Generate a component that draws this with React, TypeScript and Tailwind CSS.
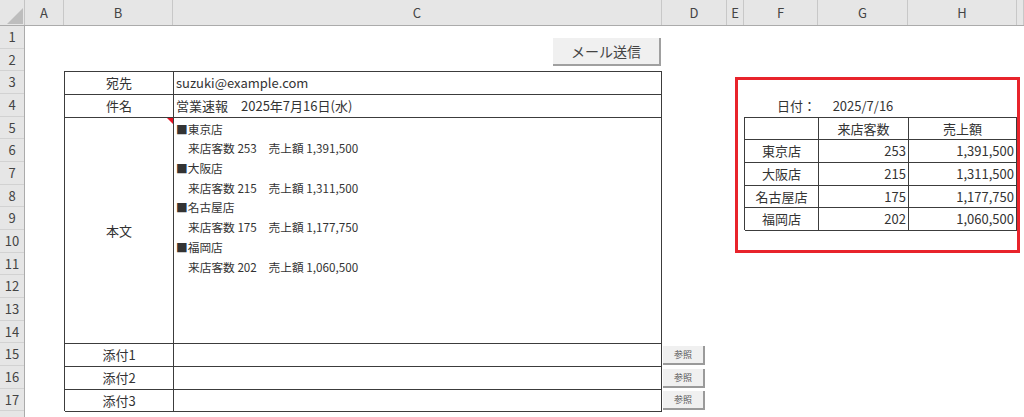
import React from 'react';

const font = { fontFamily: '"Noto Sans CJK JP", "Noto Sans", sans-serif' };

const colHeaders = [
  { label: 'A', w: 'w-[39px]' },
  { label: 'B', w: 'w-[109px]' },
  { label: 'C', w: 'w-[489px]' },
  { label: 'D', w: 'w-[65px]' },
  { label: 'E', w: 'w-[17px]' },
  { label: 'F', w: 'w-[74px]' },
  { label: 'G', w: 'w-[90px]' },
  { label: 'H', w: 'w-[109px]' },
  { label: '', w: 'flex-1' },
];

const rows = Array.from({ length: 17 }, (_, i) => i + 1);

const stores = [
  { name: '東京店', visits: 253, sales: '1,391,500' },
  { name: '大阪店', visits: 215, sales: '1,311,500' },
  { name: '名古屋店', visits: 175, sales: '1,177,750' },
  { name: '福岡店', visits: 202, sales: '1,060,500' },
];

// small legacy form button (参照)
const RefButton = ({ top }: { top: string }) => (
  <button
    className={`absolute left-[638px] ${top} flex h-[19px] w-[42px] items-center justify-center border-r-2 border-b-2 border-[#9a9a9a] bg-[#f0f0f0] text-[9px] text-[#555]`}
  >
    参照
  </button>
);

export default function App() {
  return (
    <div className="relative h-[417px] w-[1024px] overflow-hidden bg-white text-[#333]" style={font}>
      {/* column headers */}
      <div className="flex h-[26px] border-b border-[#ababab] bg-[#e6e6e6]">
        <div className="relative w-[25px] border-r border-[#c4c4c4]">
          <svg className="absolute left-[7px] top-[8px]" width="16" height="16" viewBox="0 0 16 16">
            <polygon points="16,0 16,16 0,16" fill="#bdbdbd" />
          </svg>
        </div>
        {colHeaders.map((c, i) => (
          <div
            key={i}
            className={`${c.w} flex items-center justify-center border-r border-[#c8c8c8] text-[13px] text-[#444]`}
          >
            {c.label}
          </div>
        ))}
      </div>

      <div className="flex">
        {/* row headers */}
        <div className="flex w-[25px] flex-col border-r border-[#ababab] bg-[#e6e6e6]">
          {rows.map((r) => (
            <div
              key={r}
              className="flex h-[22.67px] shrink-0 items-center justify-center border-b border-[#d2d2d2] text-[13px] text-[#444]"
            >
              {r}
            </div>
          ))}
          <div className="h-[22.67px] shrink-0" />
        </div>

        {/* sheet */}
        <div className="relative grid flex-1 grid-cols-[39px_109px_489px_65px_17px_74px_90px_109px_1fr] grid-rows-[repeat(17,22.67px)]">
          {/* mail form B3:C17 */}
          <div className="col-start-2 col-span-2 row-start-3 row-span-15 grid grid-cols-[109px_1fr] grid-rows-[22.67px_22.67px_226.7px_22.67px_22.67px_22.67px] border-l border-t border-[#3c3c3c] text-[13px]">
            <div className="flex items-center justify-center border-r border-b border-[#3c3c3c]">宛先</div>
            <div className="flex items-center border-r border-b border-[#3c3c3c] pl-[2px]">suzuki@example.com</div>
            <div className="flex items-center justify-center border-r border-b border-[#3c3c3c]">件名</div>
            <div className="flex items-center whitespace-pre border-r border-b border-[#3c3c3c] pl-[2px]">
              営業速報　2025年7月16日(水)
            </div>
            <div className="relative flex items-center justify-center border-r border-b border-[#3c3c3c]">
              本文
              <svg className="absolute right-0 top-0" width="6" height="6" viewBox="0 0 6 6">
                <polygon points="0,0 6,0 6,6" fill="#e81123" />
              </svg>
            </div>
            <div className="flex flex-col border-r border-b border-[#3c3c3c] pl-[2px] pt-[1px] text-[11.7px] leading-[19.7px]">
              {stores.map((s) => (
                <React.Fragment key={s.name}>
                  <div>■{s.name}</div>
                  <div className="whitespace-pre pl-[12px]">
                    来店客数 {s.visits}　売上額 {s.sales}
                  </div>
                </React.Fragment>
              ))}
            </div>
            <div className="flex items-center justify-center border-r border-b border-[#3c3c3c]">添付1</div>
            <div className="border-r border-b border-[#3c3c3c]" />
            <div className="flex items-center justify-center border-r border-b border-[#3c3c3c]">添付2</div>
            <div className="border-r border-b border-[#3c3c3c]" />
            <div className="flex items-center justify-center border-r border-b border-[#3c3c3c]">添付3</div>
            <div className="border-r border-b border-[#3c3c3c]" />
          </div>

          {/* date F4:G4 */}
          <div className="col-start-6 row-start-4 flex items-center justify-end pr-[2px] text-[13px]">日付：</div>
          <div className="col-start-7 row-start-4 flex items-center justify-center text-[13px]">2025/7/16</div>

          {/* summary F5:H9 */}
          <div className="col-start-6 col-span-3 row-start-5 row-span-5 grid grid-cols-[74px_90px_1fr] grid-rows-[repeat(5,22.67px)] border-l border-t border-[#3c3c3c] text-[13px]">
            <div className="border-r border-b border-[#3c3c3c]" />
            <div className="flex items-center justify-center border-r border-b border-[#3c3c3c]">来店客数</div>
            <div className="flex items-center justify-center border-r border-b border-[#3c3c3c]">売上額</div>
            {stores.map((s) => (
              <React.Fragment key={s.name}>
                <div className="flex items-center justify-center border-r border-b border-[#3c3c3c]">{s.name}</div>
                <div className="flex items-center justify-end border-r border-b border-[#3c3c3c] pr-[2px]">{s.visits}</div>
                <div className="flex items-center justify-end border-r border-b border-[#3c3c3c] pr-[2px]">{s.sales}</div>
              </React.Fragment>
            ))}
          </div>

          {/* shapes over the sheet */}
          <button className="absolute left-[528px] top-[12px] flex h-[28px] w-[108px] items-center justify-center border-r-2 border-b-2 border-[#a0a0a0] bg-[#f0f0f0] text-[14px] text-[#444]">
            メール送信
          </button>
          <RefButton top="top-[320px]" />
          <RefButton top="top-[343px]" />
          <RefButton top="top-[365px]" />

          <div className="pointer-events-none absolute left-[710px] top-[51px] h-[176px] w-[285px] border-[3px] border-[#e8232b]" />
        </div>
      </div>
    </div>
  );
}
